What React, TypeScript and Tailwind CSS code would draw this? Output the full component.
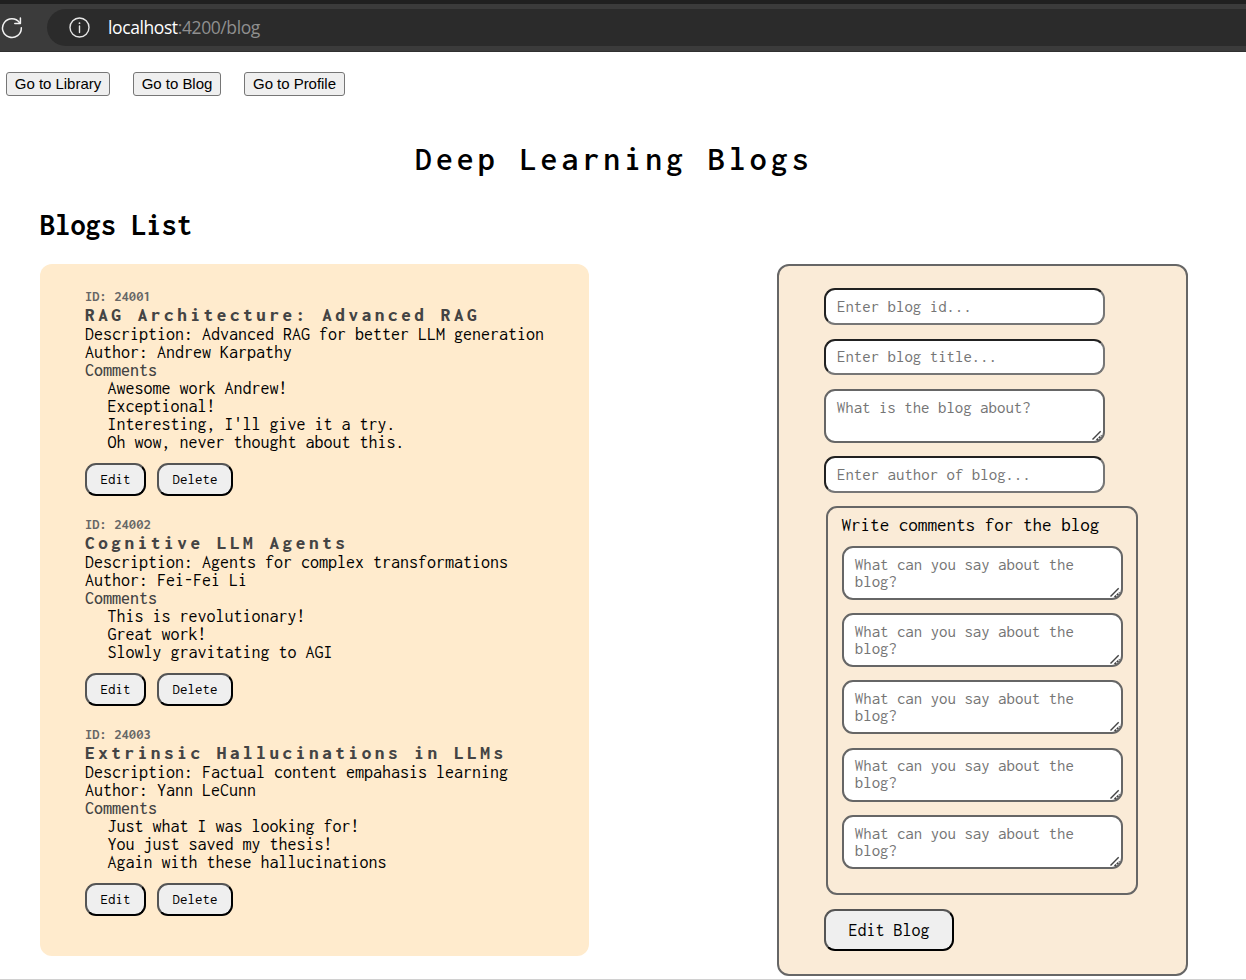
type Blog = {
  id: number;
  title: string;
  description: string;
  author: string;
  comments: string[];
};

const blogs: Blog[] = [
  {
    id: 24001,
    title: "RAG Architecture: Advanced RAG",
    description: "Advanced RAG for better LLM generation",
    author: "Andrew Karpathy",
    comments: [
      "Awesome work Andrew!",
      "Exceptional!",
      "Interesting, I'll give it a try.",
      "Oh wow, never thought about this.",
    ],
  },
  {
    id: 24002,
    title: "Cognitive LLM Agents",
    description: "Agents for complex transformations",
    author: "Fei-Fei Li",
    comments: ["This is revolutionary!", "Great work!", "Slowly gravitating to AGI"],
  },
  {
    id: 24003,
    title: "Extrinsic Hallucinations in LLMs",
    description: "Factual content empahasis learning",
    author: "Yann LeCunn",
    comments: [
      "Just what I was looking for!",
      "You just saved my thesis!",
      "Again with these hallucinations",
    ],
  },
];

const outset =
  "border-2 border-t-[#555] border-l-[#555] border-r-black border-b-black bg-[#efefef] text-black";

function BrowserBar() {
  return (
    <header className="flex h-[52px] items-start border-t-4 border-b border-t-[#202020] border-b-[#303030] bg-[#3b3b3b]">
      <svg className="mt-[13px] ml-px h-[22px] w-[22px] shrink-0" viewBox="0 0 22 22" fill="none" stroke="#f2f2f2" strokeWidth="1.5">
        <path d="M18.6 5.7A9.4 9.4 0 1 0 20.3 10.8" strokeLinecap="round" />
        <path d="M19.4 1v5.5h-5.6" strokeLinecap="round" strokeLinejoin="round" />
      </svg>
      <div className="mt-[5px] ml-6 flex h-[37px] flex-1 items-center rounded-l-full bg-[#2b2b2b]">
        <svg className="ml-[22px] h-[21px] w-[21px] shrink-0" viewBox="0 0 21 21" fill="none" stroke="#e6e6e6" strokeWidth="1.4">
          <circle cx="10.5" cy="10.5" r="9.5" />
          <path d="M10.5 9v6.5" strokeLinecap="round" />
          <circle cx="10.5" cy="6.2" r="0.9" fill="#e6e6e6" stroke="none" />
        </svg>
        <p className="-mt-0.5 ml-[18px] font-['Open_Sans',sans-serif] text-[17.5px] leading-6 tracking-[-0.4px] text-[#8f8f8f]">
          <span className="text-white">localhost</span>:4200/blog
        </p>
      </div>
    </header>
  );
}

function NavButton({ children, width }: { children: string; width: string }) {
  return (
    <button
      className={`${width} h-6 rounded-[3px] border border-[#767676] bg-[#efefef] pb-0.5 text-center font-['Liberation_Sans',Arial,sans-serif] text-[15px] leading-[17px] tracking-[-0.03px] whitespace-nowrap text-black`}
    >
      {children}
    </button>
  );
}

function SmallButton({ children, width }: { children: string; width: string }) {
  return (
    <button className={`${width} ${outset} h-full rounded-[11px] pb-px text-center text-[15px] leading-4`}>
      {children}
    </button>
  );
}

function BlogItem({ blog }: { blog: Blog }) {
  return (
    <article className="text-[18px] leading-[18px] whitespace-nowrap">
      <p className="text-[14.625px] leading-4 font-bold text-[#666]">ID: {blog.id}</p>
      <h3 className="mt-px text-[19.125px] leading-5 font-extrabold tracking-[3.62px] text-[#444]">{blog.title}</h3>
      <p>Description: {blog.description}</p>
      <p>Author: {blog.author}</p>
      <p className="font-medium text-[#444]">Comments</p>
      <ul className="pl-[22.5px]">
        {blog.comments.map((comment) => (
          <li key={comment}>{comment}</li>
        ))}
      </ul>
      <div className="mt-3 flex h-[33px] gap-[11px]">
        <SmallButton width="w-[61px]">Edit</SmallButton>
        <SmallButton width="w-[76px]">Delete</SmallButton>
      </div>
    </article>
  );
}

function TextField({ placeholder, height }: { placeholder: string; height: string }) {
  return (
    <input
      placeholder={placeholder}
      className={`${height} block w-[281px] rounded-[11px] border-2 border-t-[#212121] border-r-[#767676] border-b-[#767676] border-l-[#212121] bg-white px-[11px] text-[16.875px] placeholder:text-[#757575]`}
    />
  );
}

function TextBox({ placeholder }: { placeholder: string }) {
  return (
    <div className="relative h-[54px] w-[281px]">
      <textarea
        placeholder={placeholder}
        className="block h-full w-full resize-none rounded-[11px] border-2 border-[#666] bg-white px-[10.8px] pt-[7.8px] text-[16.875px] leading-[17px] placeholder:text-[#757575]"
      />
      <svg className="pointer-events-none absolute right-0.5 bottom-0.5 h-3 w-3" viewBox="0 0 12 12" fill="none" stroke="#444" strokeWidth="1.4">
        <path d="M1.5 10.5 9.7 2.3" />
        <path d="M5.6 11.2 10.6 6.4" strokeWidth="1.8" strokeDasharray="2.2 0.9" />
      </svg>
    </div>
  );
}

function BlogForm() {
  return (
    <form className="h-[712px] w-[411px] rounded-[12px] border-2 border-[#666] bg-[#faebd7] pt-[22px] pl-[45px]">
      <div className="flex flex-col">
        <TextField placeholder="Enter blog id..." height="h-[37px]" />
        <div className="mt-3.5">
          <TextField placeholder="Enter blog title..." height="h-9 pb-0.5" />
        </div>
        <div className="mt-3.5">
          <TextBox placeholder="What is the blog about?" />
        </div>
        <div className="mt-[13px]">
          <TextField placeholder="Enter author of blog..." height="h-[37px]" />
        </div>
      </div>
      <section className="mt-[13px] ml-0.5 h-[389px] w-[312px] rounded-[11px] border-2 border-[#666] pt-[7px] pl-3.5">
        <p className="-ml-[0.6px] text-[19.125px] leading-5">Write comments for the blog</p>
        <div className="mt-[11px] flex flex-col gap-[13.2px]">
          {[1, 2, 3, 4, 5].map((n) => (
            <TextBox key={n} placeholder="What can you say about the blog?" />
          ))}
        </div>
      </section>
      <button type="button" className={`${outset} mt-3.5 h-[42px] w-[130px] rounded-[11px] text-center text-[18px]`}>
        Edit Blog
      </button>
    </form>
  );
}

export default function App() {
  return (
    <div className="flex h-[980px] w-[1246px] flex-col overflow-hidden border-b border-[#d0d0d0] bg-white font-['Inconsolata','DejaVu_Sans_Mono',monospace] text-black">
      <BrowserBar />
      <nav className="flex gap-[23px] pt-5 pl-1.5">
        <NavButton width="w-[104px]">Go to Library</NavButton>
        <NavButton width="w-[88px]">Go to Blog</NavButton>
        <NavButton width="w-[101px]">Go to Profile</NavButton>
      </nav>
      <h1 className="mt-[45px] pl-[415px] text-[33.75px] leading-9 font-semibold tracking-[4.05px]">Deep Learning Blogs</h1>
      <h2 className="mt-8 pl-10 text-[30.4px] leading-8 font-bold">Blogs List</h2>
      <main className="mt-[23px] flex items-start justify-between pr-[58px] pl-10">
        <section className="flex h-[692px] w-[549px] flex-col gap-5 rounded-[12px] bg-[#ffebcd] pt-6 pl-[45px]">
          {blogs.map((blog) => (
            <BlogItem key={blog.id} blog={blog} />
          ))}
        </section>
        <BlogForm />
      </main>
    </div>
  );
}
